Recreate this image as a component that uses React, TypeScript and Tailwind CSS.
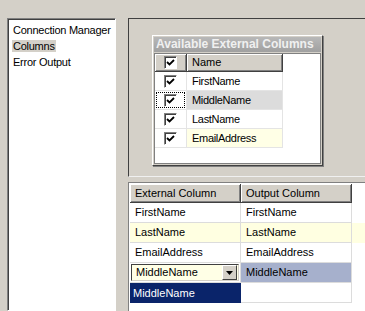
import React from "react";

const FONT = { fontFamily: '"Liberation Sans", Arial, sans-serif' };

function Check({ focus }: { focus?: boolean }) {
  return (
    <div className={"w-full h-full flex items-center justify-center " + (focus ? "outline outline-1 outline-dotted outline-black -outline-offset-2" : "")}>
      <div className="w-[13px] h-[13px] bg-white border border-t-[#808080] border-l-[#808080] border-r-white border-b-white shadow-[inset_1px_1px_0_#404040] flex items-center justify-center">
        <svg width="9" height="9" viewBox="0 0 9 9">
          <path d="M1 4 L3.5 6.5 L8 2" fill="none" stroke="#000" strokeWidth="1.8" />
        </svg>
      </div>
    </div>
  );
}

const availRows = [
  { name: "FirstName", bg: "bg-white", focus: false },
  { name: "MiddleName", bg: "bg-[#dcdcdc]", focus: true },
  { name: "LastName", bg: "bg-white", focus: false },
  { name: "EmailAddress", bg: "bg-[#ffffe6]", focus: false },
];

const mapRows = [
  { ext: "FirstName", out: "FirstName", bg: "bg-white" },
  { ext: "LastName", out: "LastName", bg: "bg-[#ffffe1]" },
  { ext: "EmailAddress", out: "EmailAddress", bg: "bg-white" },
];

const headerCell =
  "h-full flex items-center pl-[5px] bg-[#d4d0c8] border-r border-b border-r-[#404040] border-b-[#404040] shadow-[inset_1px_1px_0_#ffffff,inset_-1px_-1px_0_#808080]";

export default function App() {
  return (
    <div className="w-[365px] h-[311px] bg-[#d4d0c8] flex overflow-hidden text-[11px] text-black" style={FONT}>
      {/* left nav list */}
      <div className="w-[128px] shrink-0 pl-[7px] pr-[12px] pt-[18px] flex flex-col">
        <div className="flex-1 bg-white border border-t-[#808080] border-l-[#808080] border-r-[#ffffff] border-b-white shadow-[inset_1px_1px_0_#404040] pt-[3px] pl-[5px] whitespace-nowrap overflow-hidden tracking-[-0.25px]">
          <div className="h-[16px] leading-[16px]">Connection Manager</div>
          <div className="h-[16px] leading-[16px]">
            <span className="bg-[#d4d0c8] px-[1px] -ml-[1px]">Columns</span>
          </div>
          <div className="h-[16px] leading-[16px]">Error Output</div>
        </div>
      </div>

      {/* right side */}
      <div className="flex-1 flex flex-col pt-[18px]">
        <div className="h-[159px] border-t border-l border-t-[#404040] border-l-[#404040] border-b border-b-[#f0f0f0] pl-[23px] pt-[16px]">
          <div className="w-[171px] h-[131px] border border-t-white border-l-white border-r-[#404040] border-b-[#404040] shadow-[1px_1px_0_#808080] flex flex-col p-[1px]">
            <div className="h-[15px] bg-gradient-to-b from-[#b8b8b8] to-[#a0a0a0] text-[#f0f0f0] font-bold text-[12px] leading-[15px] pl-[2px] whitespace-nowrap overflow-hidden">
              Available External Columns
            </div>
            <div className="flex-1 mt-[1px] bg-white border border-[#808080] flex flex-col">
              <div className="h-[18px] flex">
                <div className={headerCell + " w-[32px] !pl-0 justify-center"}>
                  <Check />
                </div>
                <div className={headerCell + " w-[96px]"}>Name</div>
              </div>
              {availRows.map((r) => (
                <div key={r.name} className="h-[19px] flex">
                  <div className="w-[32px] h-full bg-white border-r border-b border-[#e4e4e4]">
                    <Check focus={r.focus} />
                  </div>
                  <div className={"w-[96px] h-full flex items-center pl-[5px] border-r border-b border-[#e4e4e4] tracking-[-0.3px] " + r.bg}>
                    {r.name}
                  </div>
                </div>
              ))}
            </div>
          </div>
        </div>

        <div className="h-[5px]" />

        {/* mapping grid */}
        <div className="flex-1 bg-white border-t border-l border-t-[#808080] border-l-[#808080] pt-[1px] pl-[1px]">
          <div className="h-[19px] flex">
            <div className={headerCell + " w-[111px]"}>External Column</div>
            <div className={headerCell + " w-[111px]"}>Output Column</div>
          </div>
          {mapRows.map((r) => (
            <div key={r.ext} className={"h-[20px] flex " + r.bg}>
              <div className="w-[111px] h-full flex items-center pl-[5px] border-r border-b border-[#dcdcdc]">{r.ext}</div>
              <div className="w-[111px] h-full flex items-center pl-[5px] border-r border-b border-[#dcdcdc]">{r.out}</div>
            </div>
          ))}
          <div className="h-[20px] flex">
            <div className="w-[111px] h-full bg-white border-r border-b border-[#dcdcdc] p-[1px]">
              <div className="h-full bg-[#ffffe6] border border-t-[#404040] border-l-[#404040] border-r-[#d4d0c8] border-b-[#d4d0c8] flex items-center">
                <div className="flex-1 pl-[4px]">MiddleName</div>
                <div className="w-[15px] h-[15px] mr-[1px] bg-[#d4d0c8] border border-t-white border-l-white border-r-[#404040] border-b-[#404040] flex items-center justify-center">
                  <svg width="7" height="4" viewBox="0 0 7 4">
                    <path d="M0 0 H7 L3.5 4 Z" fill="#000" />
                  </svg>
                </div>
              </div>
            </div>
            <div className="w-[111px] h-full flex items-center pl-[5px] bg-[#a6b0cc] border-r border-b border-[#dcdcdc]">MiddleName</div>
          </div>
          <div className="h-[20px] flex">
            <div className="w-[111px] h-full flex items-center pl-[3px] bg-[#0a246a] text-white">MiddleName</div>
            <div className="w-[111px] h-full border-r border-b border-[#dcdcdc]" />
          </div>
        </div>
      </div>
    </div>
  );
}
